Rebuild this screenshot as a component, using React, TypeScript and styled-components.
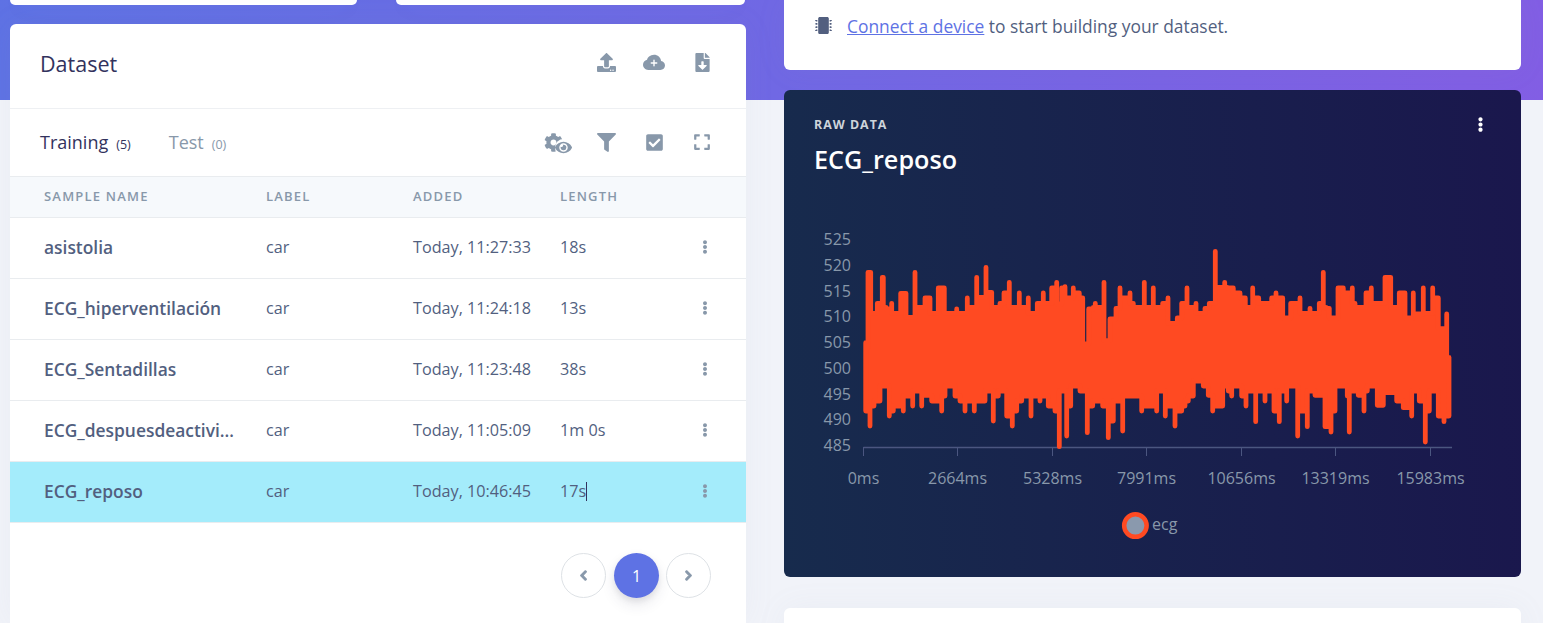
import * as React from "react";
import styled, { createGlobalStyle } from "styled-components";
import {
  FaChevronLeft,
  FaChevronRight,
  FaCheckSquare,
  FaCog,
  FaEllipsisV,
  FaExpand,
  FaEye,
  FaFileDownload,
  FaFilter,
  FaMicrochip,
  FaUpload,
} from "react-icons/fa";
import { BsCloudPlusFill } from "react-icons/bs";

const GlobalStyle = createGlobalStyle`
  html, body {
    margin: 0;
    padding: 0;
    height: 623px;
    overflow: hidden;
    font-family: "Open Sans", "Liberation Sans", sans-serif;
    color: #525f7f;
    background: #f1f3f9;
  }
  * { box-sizing: border-box; }
`;

const Page = styled.div`
  display: grid;
  grid-template-columns: 736px 737px;
  column-gap: 38px;
  padding-left: 10px;
  height: 623px;
  overflow: hidden;
  background:
    linear-gradient(87deg, #5e72e4 0, #825ee4 100%) no-repeat top left / 100% 100px,
    #f1f3f9;
`;

const Column = styled.div`
  display: flex;
  flex-direction: column;
  min-height: 0;
`;

const StatRow = styled.div`
  display: grid;
  grid-template-columns: 347px 349px;
  column-gap: 39px;
  height: 5px;
  margin-bottom: 19px;
`;

const Card = styled.div`
  background: #fff;
  border-radius: 6px;
  box-shadow: 0 0 2rem 0 rgba(136, 152, 170, 0.07);
`;

const StatCard = styled(Card)`
  border-radius: 0 0 6px 6px;
`;

const DatasetCard = styled(Card)`
  flex: 1;
  display: flex;
  flex-direction: column;
  border-radius: 6px 6px 0 0;
`;

const CardHeader = styled.div`
  display: flex;
  align-items: center;
  justify-content: space-between;
  height: 85px;
  padding: 0 20px 6px 30px;
  border-bottom: 1px solid #eef0f3;
`;

const Title = styled.h3`
  margin: 0;
  font-size: 21.5px;
  font-weight: 500;
  color: #32325d;
`;

const Icons = styled.div<{ $lift?: number }>`
  display: flex;
  margin-bottom: ${(p) => p.$lift ?? 0}px;
`;

const IconButton = styled.span<{ $size?: number; $nudge?: number }>`
  position: relative;
  display: flex;
  align-items: center;
  justify-content: center;
  width: 48px;
  height: 24px;
  padding-right: ${(p) => p.$nudge ?? 0}px;
  font-size: ${(p) => p.$size ?? 19}px;
  color: #8898aa;
`;

const EyeBadge = styled.span`
  position: absolute;
  left: 21px;
  top: 9px;
  display: flex;
  border-radius: 50%;
  font-size: 17px;
  background: #fff;
`;

const TabBar = styled.div`
  display: flex;
  align-items: center;
  justify-content: space-between;
  height: 67px;
  padding: 0 20px 1px 30px;
`;

const Tabs = styled.div`
  display: flex;
  gap: 38px;
`;

const Tab = styled.span<{ $active?: boolean }>`
  font-size: 18px;
  color: ${(p) => (p.$active ? "#32325d" : "#8898aa")};
  small {
    margin-left: 8px;
    font-size: 12.5px;
  }
`;

const Table = styled.table`
  width: 100%;
  border-collapse: collapse;
  table-layout: fixed;
`;

const Th = styled.th<{ $width?: number }>`
  width: ${(p) => (p.$width ? `${p.$width}px` : "auto")};
  height: 41px;
  padding: 0 0 2px;
  text-align: left;
  font-size: 13px;
  font-weight: 600;
  letter-spacing: 1.2px;
  text-transform: uppercase;
  color: #8898aa;
  background: #f6f9fc;
  border-top: 1px solid #e9ecef;
  border-bottom: 1px solid #e9ecef;
  &:first-child {
    padding-left: 34px;
  }
`;

const Row = styled.tr<{ $selected?: boolean }>`
  height: 61px;
  background: ${(p) => (p.$selected ? "#a4ecfb" : "#fff")};
  border-bottom: 1px solid #e9ecef;
`;

const Td = styled.td`
  padding: 0 0 2px;
  font-size: 16.2px;
  color: #525f7f;
`;

const NameCell = styled(Td)`
  padding: 0 29px 2px 34px;
  font-size: 17.4px;
  font-weight: 600;
  white-space: nowrap;
  overflow: hidden;
  text-overflow: ellipsis;
`;

const MenuCell = styled(Td)`
  padding-left: 10px;
  font-size: 14px;
  color: #8898aa;
  svg {
    display: block;
  }
`;

const Caret = styled.span`
  display: inline-block;
  width: 1px;
  height: 19px;
  margin-bottom: -4px;
  background: #32325d;
`;

const Pagination = styled.div`
  display: flex;
  justify-content: flex-end;
  gap: 7px;
  padding: 30px 35px 0 0;
`;

const PageLink = styled.span<{ $active?: boolean }>`
  display: flex;
  align-items: center;
  justify-content: center;
  width: 45px;
  height: 45px;
  margin-left: ${(p) => (p.$active ? 1 : 0)}px;
  border-radius: 50%;
  font-size: ${(p) => (p.$active ? 16 : 11)}px;
  color: ${(p) => (p.$active ? "#fff" : "#8898aa")};
  background: ${(p) => (p.$active ? "#5e72e4" : "#fff")};
  border: ${(p) => (p.$active ? "none" : "1px solid #dee2e6")};
  box-shadow: ${(p) => (p.$active ? "0 7px 14px rgba(50,50,93,.1), 0 3px 6px rgba(0,0,0,.08)" : "none")};
  svg {
    stroke: currentColor;
    stroke-width: 50px;
  }
`;

const ConnectCard = styled(Card)`
  display: flex;
  align-items: center;
  gap: 15px;
  flex-shrink: 0;
  height: 70px;
  padding: 0 0 19px 31px;
  border-radius: 0 0 6px 6px;
  font-size: 17.4px;
  margin-bottom: 20px;
  a {
    color: #5e72e4;
    text-decoration: underline;
  }
`;

const ChipIcon = styled.span`
  display: flex;
  font-size: 17px;
  color: #525f7f;
`;

const ChartCard = styled.div`
  flex-shrink: 0;
  position: relative;
  height: 487px;
  border-radius: 6px;
  background: linear-gradient(87deg, #172b4d 0, #1a174d 100%);
  margin-bottom: 31px;
`;

const ChartHeader = styled.div`
  height: 100px;
  padding: 26px 30px 0;
`;

const Eyebrow = styled.div`
  font-size: 12.4px;
  line-height: 17px;
  font-weight: 700;
  letter-spacing: 1px;
  text-transform: uppercase;
  color: #ced4da;
`;

const ChartTitle = styled.h2`
  margin: 8px 0 0;
  font-size: 25.2px;
  line-height: 36px;
  font-weight: 600;
  color: #fff;
`;

const ChartMenu = styled.span`
  position: absolute;
  top: 27px;
  right: 33px;
  font-size: 15px;
  color: #fff;
  svg {
    display: block;
  }
`;

const ChartSvg = styled.svg`
  display: block;
  text {
    font-family: "Open Sans", "Liberation Sans", sans-serif;
    font-size: 16px;
    fill: #8898aa;
  }
`;

const NextCard = styled(Card)`
  flex: 1;
  min-height: 40px;
  border-radius: 6px 6px 0 0;
`;

// envelope of the wave, traced from the picture in 3x crop coordinates
const topA = [197,360,204,135,212,135,216,258,225,258,232,228,240,228,247,150,250,150,258,240,268,245,275,228,282,258,292,258,302,198,318,198,325,270,335,270,345,135,353,240,365,240,375,212,390,212,398,258,405,258,415,182,433,182,440,258,470,245,480,258,490,258,502,212,510,240,520,240,530,150,537,210,550,210,558,120,567,195,575,195,582,240,590,240,600,228,612,197,620,197,628,165,636,240,648,240,658,197,665,240,675,240,685,212,692,258,702,258,712,228,722,228,730,197,738,228,748,228,755,182,770,165,778,230,785,182,795,178,803,212,812,212,820,182,828,197,838,197,848,212,858,350,866,245,880,240,886,228,895,240,903,240,912,165,920,340,930,275,940,275,948,243,960,182,970,212,980,212,990,197,1000,228,1010,240,1025,240,1033,165,1043,240];
const topB = [32,240,40,182,48,240,60,240,68,228,84,212,93,288,105,288,112,272,125,228,135,228,141,182,150,240,160,240,168,228,178,258,188,258,195,243,208,228,216,228,226,72,234,180,248,180,254,165,262,180,280,182,290,197,300,197,306,212,316,212,322,240,332,240,338,182,346,212,356,212,365,228,385,228,395,212,408,197,416,212,428,212,436,272,445,272,452,228,470,228,480,212,490,258,500,258,510,243,518,258,530,258,538,228,550,135,558,240,568,243,575,272,585,272,594,182,610,182,620,197,630,197,637,182,645,228,655,240,665,240,678,197,686,197,694,182,702,228,722,228,735,150,752,150,760,240,770,240,778,197,795,197,802,272,812,272,820,197,828,260,840,260,850,182,860,258,868,258,878,182,886,212,895,212,903,304,912,304,920,260,927,390];
const bottomA = [197,360,197,565,210,610,222,550,240,535,250,490,260,490,268,580,280,565,295,550,310,565,320,520,330,520,338,550,350,505,365,550,375,518,395,535,410,535,425,565,435,520,450,490,465,520,480,535,495,565,510,535,523,565,540,535,555,535,562,505,580,595,595,520,605,505,620,580,637,610,650,565,665,535,680,520,693,580,705,520,720,535,735,520,745,550,765,565,778,672,790,505,800,640,812,550,825,490,840,505,862,630,878,550,900,535,908,550,925,645,940,595,955,535,968,625,985,520,1010,520,1025,565,1045,550];
const bottomB = [35,550,50,565,60,505,70,505,76,580,85,550,95,550,105,610,115,565,125,565,135,550,145,535,160,520,170,475,185,475,190,490,205,518,218,565,230,550,248,550,255,490,265,505,275,520,285,490,295,490,305,520,318,550,330,505,340,505,347,597,355,505,365,505,375,535,385,505,395,505,402,565,418,597,428,505,440,535,455,490,465,490,473,640,482,565,490,565,502,612,512,505,525,518,545,518,555,612,573,628,585,565,595,490,610,490,622,520,628,628,640,505,655,518,672,565,682,505,695,490,712,548,730,548,750,510,770,535,790,555,815,580,825,505,838,535,856,658,868,565,880,505,895,580,912,597,925,580,927,580];

// turn the trace into stairs: each jump sits at the x of the point further out,
// so a single peak stays as thin as the stroke
const toSteps = (raw: number[], originX: number, inset: number, outward: 1 | -1) => {
  const points: string[] = [];
  const px = (x: number) => (originX + x / 3).toFixed(1);
  const py = (y: number) => (225 + (y + inset) / 3).toFixed(1);
  points.push(`${px(raw[0])},${py(raw[1])}`);
  for (let i = 2; i < raw.length; i += 2) {
    const prevX = raw[i - 2];
    const prevY = raw[i - 1];
    const x = raw[i];
    const y = raw[i + 1];
    const goingOut = (y - prevY) * outward > 0;
    points.push(goingOut ? `${px(x)},${py(prevY)}` : `${px(prevX)},${py(y)}`);
    points.push(`${px(x)},${py(y)}`);
  }
  return points;
};

const wavePoints = [
  ...toSteps(topA, 800, 7, -1),
  ...toSteps(topB, 1140, 7, -1),
  ...toSteps(bottomB, 1140, -7, 1).reverse(),
  ...toSteps(bottomA, 800, -7, 1).reverse(),
].join(" ");

const yLabels = [
  { text: "525", y: 239 },
  { text: "520", y: 265 },
  { text: "515", y: 291 },
  { text: "510", y: 316 },
  { text: "505", y: 342 },
  { text: "500", y: 368 },
  { text: "495", y: 394 },
  { text: "490", y: 419 },
  { text: "485", y: 445 },
];

const xLabels = [
  { text: "0ms", x: 863.5 },
  { text: "2664ms", x: 957.5 },
  { text: "5328ms", x: 1052.5 },
  { text: "7991ms", x: 1146.5 },
  { text: "10656ms", x: 1241.5 },
  { text: "13319ms", x: 1335.5 },
  { text: "15983ms", x: 1430.5 },
];

const samples = [
  { name: "asistolia", added: "Today, 11:27:33", length: "18s" },
  { name: "ECG_hiperventilación", added: "Today, 11:24:18", length: "13s" },
  { name: "ECG_Sentadillas", added: "Today, 11:23:48", length: "38s" },
  { name: "ECG_despuesdeactividad", added: "Today, 11:05:09", length: "1m 0s" },
  { name: "ECG_reposo", added: "Today, 10:46:45", length: "17s", selected: true },
];

const Chart = () => (
  <ChartSvg width={737} height={387} viewBox="784 190 737 387">
    {yLabels.map((l) => (
      <text key={l.text} x={851} y={l.y} dy="6" textAnchor="end">
        {l.text}
      </text>
    ))}
    <path d="M863.5 447.5H1452" stroke="#4b5680" strokeWidth="1.5" fill="none" />
    {xLabels.map((l) => (
      <g key={l.text}>
        <line x1={l.x} x2={l.x} y1={447} y2={456} stroke="#4b5680" strokeWidth="1" />
        <text x={l.x} y={484} textAnchor="middle">
          {l.text}
        </text>
      </g>
    ))}
    <polygon points={wavePoints} fill="#ff4a22" stroke="#ff4a22" strokeWidth="4.8" strokeLinejoin="round" />
    <circle cx={1135.4} cy={525.6} r={11.25} fill="#8a99ad" stroke="#ff4a22" strokeWidth="4.5" />
    <text x={1152} y={530}>
      ecg
    </text>
  </ChartSvg>
);

export default function App() {
  return (
    <Page>
      <GlobalStyle />
      <Column>
        <StatRow>
          <StatCard />
          <StatCard />
        </StatRow>
        <DatasetCard>
          <CardHeader>
            <Title>Dataset</Title>
            <Icons $lift={1}>
              <IconButton>
                <FaUpload />
              </IconButton>
              <IconButton $size={22}>
                <BsCloudPlusFill />
              </IconButton>
              <IconButton>
                <FaFileDownload />
              </IconButton>
            </Icons>
          </CardHeader>
          <TabBar>
            <Tabs>
              <Tab $active>
                Training<small>(5)</small>
              </Tab>
              <Tab>
                Test<small>(0)</small>
              </Tab>
            </Tabs>
            <Icons>
              <IconButton $nudge={9}>
                <FaCog />
                <EyeBadge>
                  <FaEye />
                </EyeBadge>
              </IconButton>
              <IconButton>
                <FaFilter />
              </IconButton>
              <IconButton>
                <FaCheckSquare />
              </IconButton>
              <IconButton $size={18}>
                <FaExpand />
              </IconButton>
            </Icons>
          </TabBar>
          <Table>
            <thead>
              <tr>
                <Th $width={256}>Sample name</Th>
                <Th $width={147}>Label</Th>
                <Th $width={147}>Added</Th>
                <Th $width={128}>Length</Th>
                <Th />
              </tr>
            </thead>
            <tbody>
              {samples.map((s) => (
                <Row key={s.name} $selected={s.selected}>
                  <NameCell>{s.name}</NameCell>
                  <Td>car</Td>
                  <Td>{s.added}</Td>
                  <Td>
                    {s.length}
                    {s.selected && <Caret />}
                  </Td>
                  <MenuCell>
                    <FaEllipsisV />
                  </MenuCell>
                </Row>
              ))}
            </tbody>
          </Table>
          <Pagination>
            <PageLink>
              <FaChevronLeft />
            </PageLink>
            <PageLink $active>1</PageLink>
            <PageLink>
              <FaChevronRight />
            </PageLink>
          </Pagination>
        </DatasetCard>
      </Column>
      <Column>
        <ConnectCard>
          <ChipIcon>
            <FaMicrochip />
          </ChipIcon>
          <span>
            <a>Connect a device</a> to start building your dataset.
          </span>
        </ConnectCard>
        <ChartCard>
          <ChartHeader>
            <Eyebrow>Raw Data</Eyebrow>
            <ChartTitle>ECG_reposo</ChartTitle>
          </ChartHeader>
          <ChartMenu>
            <FaEllipsisV />
          </ChartMenu>
          <Chart />
        </ChartCard>
        <NextCard />
      </Column>
    </Page>
  );
}
